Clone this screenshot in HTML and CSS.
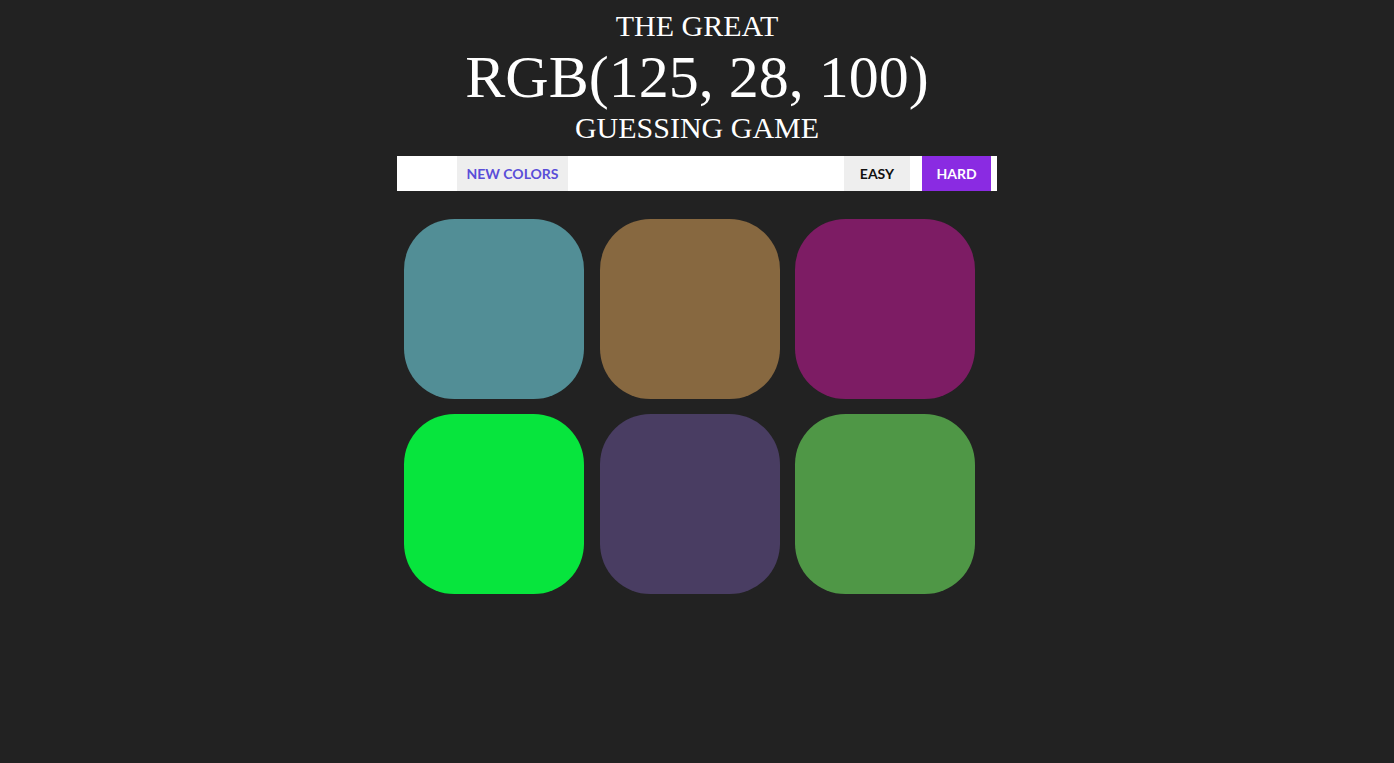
FILE: index.html
```html
<!DOCTYPE html>
<html>
<head>
<meta charset="utf-8">
<link rel="stylesheet" href="styles.css">
</head>
<body>
<h1 class="title">
  <span class="title-small">THE GREAT</span>
  <span class="title-big">RGB(125, 28, 100)</span>
  <span class="title-small title-bottom">GUESSING GAME</span>
</h1>
<div class="stripe">
  <button class="btn btn-reset">NEW COLORS</button>
  <span class="message"></span>
  <button class="btn btn-mode">EASY</button>
  <button class="btn btn-mode selected">HARD</button>
</div>
<div class="board">
  <div class="square" style="background: rgb(82, 142, 150);"></div>
  <div class="square" style="background: rgb(135, 104, 64);"></div>
  <div class="square" style="background: rgb(125, 28, 100);"></div>
  <div class="square" style="background: rgb(7, 229, 61);"></div>
  <div class="square" style="background: rgb(73, 61, 98);"></div>
  <div class="square" style="background: rgb(79, 151, 70);"></div>
</div>
</body>
</html>
```
FILE: styles.css
```css
html, body {
  margin: 0;
  padding: 0;
  background: #222222;
}

.title {
  margin: 0;
  padding-top: 9px;
  color: #ffffff;
  font-family: "Liberation Serif", "Times New Roman", serif;
  font-weight: normal;
  text-align: center;
  text-transform: uppercase;
}

.title span {
  display: block;
}

.title-small {
  font-size: 30px;
  line-height: 34px;
}

.title-big {
  font-size: 60px;
  line-height: 60px;
  margin-top: 4px;
}

.title-bottom {
  margin-top: 4px;
}

.stripe {
  width: 600px;
  height: 35px;
  margin: 11px auto 0;
  background: #ffffff;
  display: flex;
  box-sizing: border-box;
  padding: 0 6px 0 60px;
}

.message {
  flex: 1;
}

.btn {
  border: none;
  margin: 0;
  padding: 0 0 1px;
  height: 35px;
  background: #eeeeee;
  font-family: Lato, "Open Sans", sans-serif;
  font-weight: 700;
  font-size: 14px;
  letter-spacing: 0;
  text-transform: uppercase;
  cursor: pointer;
  outline: none;
}

.btn-reset {
  width: 111px;
  color: #5a4ed8;
}

.btn-mode {
  width: 66px;
  color: #111111;
}

.btn-mode.selected {
  width: 69px;
  margin-left: 12px;
  background: #8a2be2;
  color: #ffffff;
}

.board {
  width: 600px;
  margin: 28px auto 0;
  box-sizing: border-box;
  padding-left: 7px;
  display: grid;
  grid-template-columns: repeat(3, 180px);
  column-gap: 15.5px;
  row-gap: 15px;
}

.square {
  width: 180px;
  height: 180px;
  border-radius: 28%;
}
```
